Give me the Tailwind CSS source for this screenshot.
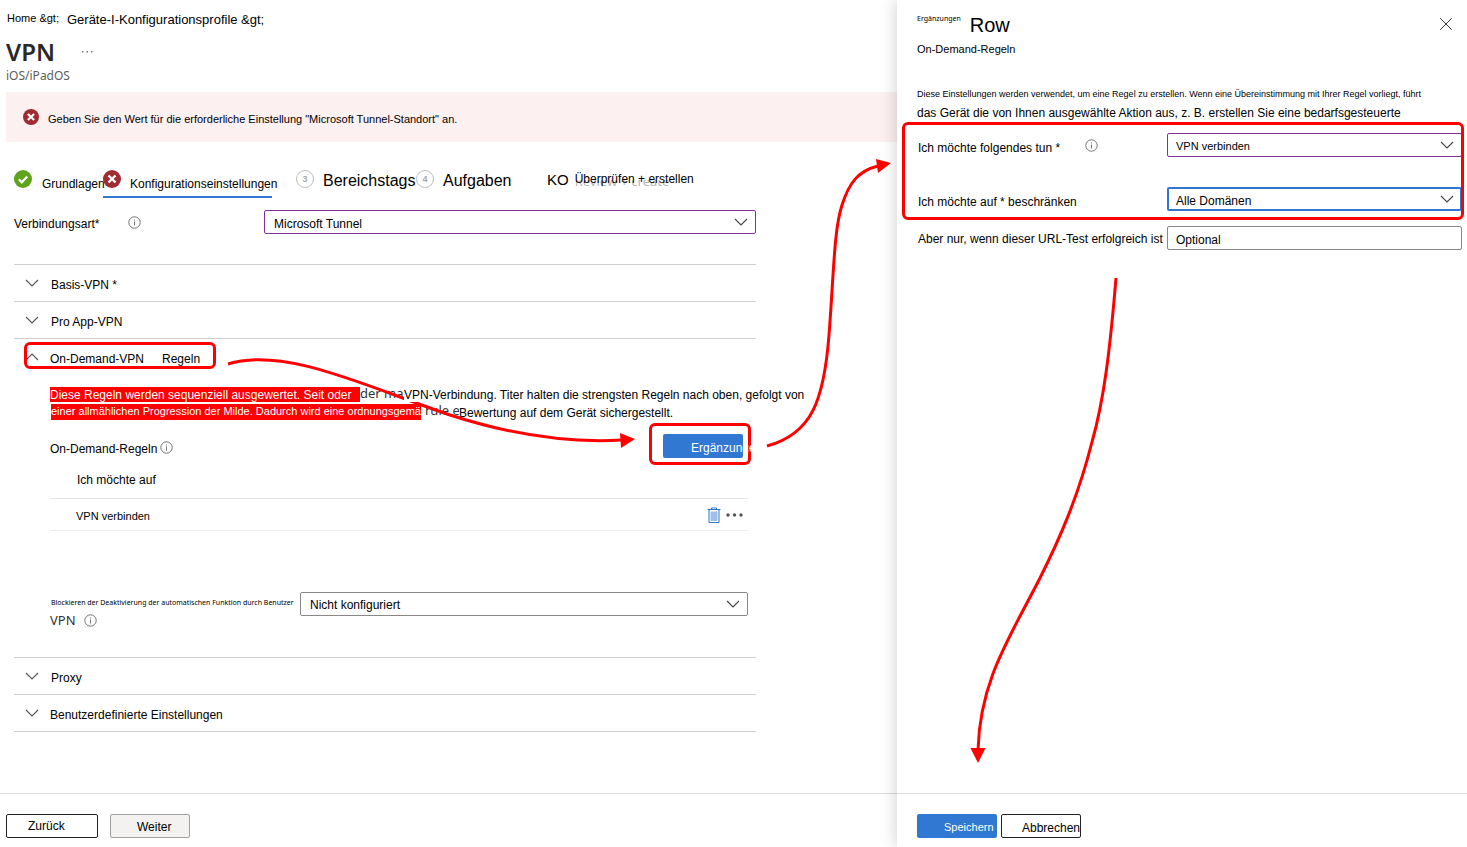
<!DOCTYPE html>
<html lang="de">
<head>
<meta charset="utf-8">
<title>VPN – Konfigurationsprofil</title>
<script src="https://cdn.jsdelivr.net/npm/@tailwindcss/browser@4"></script>
</head>
<body class="bg-white font-['Liberation_Sans',Arial,sans-serif] text-xs text-black">
<svg class="hidden">
  <symbol id="chev" viewBox="0 0 14 8"><path d="M1 1l6 6 6-6" fill="none" stroke="currentColor" stroke-width="1.100"/></symbol>
  <symbol id="info" viewBox="0 0 13 13"><circle cx="6.5" cy="6.5" r="5.7" fill="none" stroke="#737373"/><path d="M6 5.5h1v4H6zM6 3.4h1v1.100H6z" fill="#737373"/></symbol>
  <symbol id="fail" viewBox="0 0 18 18"><circle cx="9" cy="9" r="9" fill="#a02b30"/><path d="M5.500 5.500l7 7M12.500 5.500l-7 7" stroke="#fff" stroke-width="2.400"/></symbol>
</svg>
<div class="relative flex min-h-screen overflow-hidden">
  <main class="flex min-w-0 flex-1 flex-col">
    <nav class="flex h-9 items-center gap-2 pl-[7px]" aria-label="Brotkrumen">
      <a href="#" class="text-[11px]">Home &amp;gt;</a>
      <a href="#" class="pt-1 text-[13px]">Geräte-I-Konfigurationsprofile &amp;gt;</a>
    </nav>
    <div class="flex h-8 items-center gap-[26px] pl-[6px]">
      <h1 class="font-['Noto_Sans',sans-serif] text-2xl leading-8 font-semibold text-[#292827]">VPN</h1>
      <button aria-label="Mehr"><svg class="h-[2px] w-3" viewBox="0 0 12 2" fill="#777"><path d="M1 0h1.500v1.500H1zM5.500 0H7v1.500H5.500zM10 0h1.500v1.500H10z"/></svg></button>
    </div>
    <p class="h-6 pl-[6px] font-['Noto_Sans',sans-serif] leading-4 text-[#605e5c]">iOS/iPadOS</p>
    <div role="alert" class="ml-[6px] flex h-[50px] items-center gap-[9px] bg-[#fdf0f0] pl-[17px]">
      <svg class="size-4"><use href="#fail"/></svg>
      <span class="pt-1 text-[11px]">Geben Sie den Wert für die erforderliche Einstellung "Microsoft Tunnel-Standort" an.</span>
    </div>
    <ol class="mt-[28px] flex h-7 pl-[14px]">
      <li class="flex w-[89px] gap-[10px] whitespace-nowrap">
        <svg class="size-[18px] shrink-0" viewBox="0 0 18 18"><circle cx="9" cy="9" r="9" fill="#5ea41c"/><path d="M4.800 9.300l3 3L13.200 6.500" fill="none" stroke="#fff" stroke-width="2.200"/></svg>
        <span class="pt-[6px]">Grundlagen</span></li>
      <li class="flex w-[169px] gap-[9px] border-b-2 border-[#3078d1] whitespace-nowrap">
        <svg class="size-[18px] shrink-0"><use href="#fail"/></svg>
        <span class="pt-[6px]">Konfigurationseinstellungen</span></li>
      <li class="ml-6 flex w-[120px] gap-[9px] whitespace-nowrap">
        <span class="flex size-[18px] shrink-0 items-center justify-center rounded-full border border-[#bdbdbd] text-[9px] font-bold text-[#a8a8a8]">3</span><span class="text-base leading-[22px]">Bereichstags</span></li>
      <li class="flex w-[131px] gap-[9px] whitespace-nowrap">
        <span class="flex size-[18px] shrink-0 items-center justify-center rounded-full border border-[#bdbdbd] text-[9px] font-bold text-[#a8a8a8]">4</span><span class="text-base leading-[22px]">Aufgaben</span></li>
      <li class="flex gap-[6px] whitespace-nowrap">
        <span class="text-[15px] leading-5">KO</span>
        <span class="relative"><span class="absolute top-[10px] left-0 flex h-[6px] items-end overflow-hidden font-['Noto_Sans',sans-serif] text-[13px] leading-[10px] text-[#b5b5b5]" aria-hidden="true">Review + create</span><span class="relative leading-[18px]">Überprüfen + erstellen</span></span></li>
    </ol>
    <div class="mt-3 flex h-6 items-center pl-[14px]">
      <label for="conn" class="w-[114px] pt-1">Verbindungsart*</label>
      <svg class="size-[13px]"><use href="#info"/></svg>
      <div class="relative ml-[123px] w-[492px]">
        <select id="conn" class="block h-6 w-full appearance-none rounded-xs border border-[#8230a0] pt-1 pl-[9px] text-xs"><option>Microsoft Tunnel</option></select>
        <svg class="pointer-events-none absolute top-2 right-2 h-2 w-[14px] text-[#444]"><use href="#chev"/></svg>
      </div>
    </div>
    <div class="mt-[30px] ml-[14px] w-[742px] border-b border-[#d2d0ce]">
      <button class="flex h-[37px] w-full items-center border-t border-[#d2d0ce] pl-[11px]"><svg class="h-2 w-[14px] text-[#555]"><use href="#chev"/></svg><span class="pt-1 pl-3">Basis-VPN *</span></button>
      <button class="flex h-[37px] w-full items-center border-t border-[#d2d0ce] pl-[11px]"><svg class="h-2 w-[14px] text-[#555]"><use href="#chev"/></svg><span class="pt-1 pl-3">Pro App-VPN</span></button>
      <section class="border-t border-[#d2d0ce]">
        <div class="relative">
          <button class="flex h-9 w-full items-center pl-[11px]"><svg class="h-2 w-[14px] rotate-180 text-[#555]"><use href="#chev"/></svg><span class="pt-1 pl-[11px]">On-Demand-VPN</span><span class="pt-1 pl-[18px]">Regeln</span></button>
          <span class="pointer-events-none absolute top-[3px] left-[10px] h-[27px] w-[192px] rounded-md border-3 border-[#fe0000]"></span>
        </div>
        <div class="pl-9">
          <p class="mt-3 flex h-[15px] whitespace-nowrap"><span class="w-[310px] shrink-0 bg-[#fe0000] leading-4 text-white">Diese Regeln werden sequenziell ausgewertet. Seit oder</span><span class="w-11 shrink-0 overflow-hidden font-['Noto_Sans',sans-serif] text-[13px] leading-3 text-[#333]">der ma</span><span class="relative z-20 bg-white leading-4">VPN-Verbindung. Titer halten die strengsten Regeln nach oben, gefolgt von</span></p>
          <p class="mt-[2px] ml-px flex h-4 whitespace-nowrap"><span class="w-[370px] shrink-0 overflow-hidden bg-[#fe0000] text-[11px] leading-[15px] text-white">einer allmählichen Progression der Milde. Dadurch wird eine ordnungsgemä</span><span class="w-[38px] shrink-0 overflow-hidden pl-1 font-['Noto_Sans',sans-serif] text-[13px] leading-3 text-[#333]">rule e</span><span class="leading-[18px]">Bewertung auf dem Gerät sichergestellt.</span></p>
          <div class="relative mt-[3px] flex h-[42px] items-center">
            <span class="pt-[10px]">On-Demand-Regeln</span><svg class="mt-[7px] ml-[3px] size-[13px]"><use href="#info"/></svg>
            <span class="pointer-events-none absolute top-0 left-[599px] h-[42px] w-[102px] rounded-md border-3 border-[#fe0000]"></span>
            <button class="relative mt-[4px] mr-[13px] ml-auto h-6 w-20 rounded-xs bg-[#3078d1] pt-1 pl-7 text-left whitespace-nowrap text-white">Ergänzungen</button>
          </div>
          <table class="mt-[-4px] w-[698px] border-collapse text-left">
            <thead><tr class="h-[37px] border-b border-[#e6e6e6]"><th class="pt-[2px] pl-[27px] font-normal">Ich möchte auf</th><th></th></tr></thead>
            <tbody><tr class="h-8 border-b border-[#eeeeee]"><td class="pt-1 pl-[26px] text-[11px]">VPN verbinden</td>
            <td class="pt-px"><span class="flex items-center justify-end gap-[5px] pr-[5px]">
              <button aria-label="Löschen"><svg class="h-4 w-[14px]" viewBox="0 0 14 16"><path d="M4.500 2.500v-1.500h5v1.500M.5 2.500h13M2 2.500v13h10v-13" fill="none" stroke="#3078d1"/><path d="M3.500 4.500h7V14h-7z" fill="#9dbfea"/></svg></button>
              <button aria-label="Mehr"><svg class="h-1 w-[17px]" viewBox="0 0 17 4" fill="#555"><circle cx="2" cy="2" r="1.700"/><circle cx="8.500" cy="2" r="1.700"/><circle cx="15" cy="2" r="1.700"/></svg></button>
            </span></td></tr></tbody>
          </table>
          <div class="mt-[61px] flex h-[65px] items-start">
            <label for="block" class="w-[250px] whitespace-nowrap"><span class="block pt-[5px] pl-px font-['Noto_Sans',sans-serif] text-[7px] leading-3">Blockieren der Deaktivierung der automatischen Funktion durch Benutzer</span><span class="flex h-6 items-center gap-2 font-['Noto_Sans',sans-serif] text-[13px] text-[#333]">VPN <svg class="size-[13px]"><use href="#info"/></svg></span></label>
            <div class="relative w-[448px]">
              <select id="block" class="block h-6 w-full appearance-none rounded-xs border border-[#8a8886] pt-[2px] pl-[9px] text-xs"><option>Nicht konfiguriert</option></select>
              <svg class="pointer-events-none absolute top-2 right-2 h-2 w-[14px] text-[#444]"><use href="#chev"/></svg>
            </div>
          </div>
        </div>
      </section>
      <button class="flex h-[37px] w-full items-center border-t border-[#d2d0ce] pl-[11px]"><svg class="h-2 w-[14px] text-[#555]"><use href="#chev"/></svg><span class="pt-1 pl-3">Proxy</span></button>
      <button class="flex h-[37px] w-full items-center border-t border-[#d2d0ce] pl-[11px]"><svg class="h-2 w-[14px] text-[#555]"><use href="#chev"/></svg><span class="pt-1 pl-[11px]">Benutzerdefinierte Einstellungen</span></button>
    </div>
    <footer class="mt-auto flex h-[54px] gap-3 border-t border-[#dcdcdc] pt-5 pl-[6px]">
      <button class="h-6 w-[92px] rounded-xs border border-[#222] pl-[21px] text-left">Zurück</button>
      <button class="h-6 w-20 rounded-xs border border-[#a19f9d] bg-[#f3f2f1] pt-px pl-[26px] text-left">Weiter</button>
    </footer>
  </main>

  <aside class="relative z-10 flex w-[570px] shrink-0 flex-col bg-white shadow-[0_0_16px_rgba(0,0,0,0.2)]">
    <header class="flex h-10 items-start pr-[15px] pl-5">
      <span class="pt-[13px] font-['Noto_Sans',sans-serif] text-[7px] leading-3">Ergänzungen</span>
      <h2 class="pt-[13px] pl-[9px] text-xl leading-6">Row</h2>
      <button aria-label="Schließen" class="mt-[18px] ml-auto"><svg class="size-3" viewBox="0 0 12 12"><path d="M.3.3l11.400 11.400M11.700.3L.3 11.700" stroke="#333"/></svg></button>
    </header>
    <p class="h-[47px] pl-5 text-[11px] leading-[18px]">On-Demand-Regeln</p>
    <p class="pl-5 whitespace-nowrap"><span class="block text-[9px] leading-[14px]">Diese Einstellungen werden verwendet, um eine Regel zu erstellen. Wenn eine Übereinstimmung mit Ihrer Regel vorliegt, führt</span><span class="block leading-6">das Gerät die von Ihnen ausgewählte Aktion aus, z. B. erstellen Sie eine bedarfsgesteuerte</span></p>
    <div class="relative mt-[-3px] h-[98px] pt-[11px] pr-[5px] pl-[21px]">
      <div class="flex h-6 items-center">
        <label for="act" class="w-[167px] pt-[6px]">Ich möchte folgendes tun *</label><svg class="size-[13px]"><use href="#info"/></svg>
        <div class="relative ml-auto w-[295px]"><select id="act" class="block h-6 w-full appearance-none rounded-xs border border-[#8230a0] pt-[2px] pl-2 text-[11px]"><option>VPN verbinden</option></select>
        <svg class="pointer-events-none absolute top-2 right-2 h-2 w-[14px] text-[#444]"><use href="#chev"/></svg></div>
      </div>
      <div class="mt-[30px] flex h-6 items-center">
        <label for="dom" class="pt-[6px]">Ich möchte auf * beschränken</label>
        <div class="relative ml-auto w-[295px]"><select id="dom" class="block h-6 w-full appearance-none rounded-xs border-2 border-[#3078d1] pt-1 pl-[7px] text-xs"><option>Alle Domänen</option></select>
        <svg class="pointer-events-none absolute top-2 right-2 h-2 w-[14px] text-[#444]"><use href="#chev"/></svg></div>
      </div>
      <span class="pointer-events-none absolute inset-y-0 right-[3px] left-[5px] rounded-md border-3 border-[#fe0000]"></span>
    </div>
    <div class="mt-[6px] flex items-center pr-[5px] pl-[21px]">
      <label for="url" class="pt-[2px] whitespace-nowrap">Aber nur, wenn dieser URL-Test erfolgreich ist</label>
      <input id="url" placeholder="Optional" class="ml-auto h-6 w-[295px] rounded-xs border border-[#8a8886] pt-1 pl-2 placeholder:text-black">
    </div>
    <footer class="mt-auto flex h-[54px] gap-1 border-t border-[#dcdcdc] pt-5 pl-5">
      <button class="h-6 w-20 rounded-xs bg-[#3078d1] pt-[2px] pl-[27px] text-left text-[11px] text-white">Speichern</button>
      <button class="h-6 w-20 rounded-xs border border-[#222] pt-1 pl-5 text-left">Abbrechen</button>
    </footer>
  </aside>

  <svg class="pointer-events-none absolute top-0 left-0 z-10 h-[847px] w-[1467px]" viewBox="0 0 1467 847" fill="none" stroke="#fe0000" stroke-width="3" aria-hidden="true">
    <path d="M228 364C285 346 370 388 450 415C515 436 570 443 622 440"/>
    <path d="M767 446C812 434 824 400 829 335C834 270 834 230 842 205C849 183 858 171 878 166"/>
    <path d="M1116 278C1110 350 1104 400 1092 442C1078 497 1060 538 1040 578C1010 637 980 680 978 750"/>
    <path d="M635 439l-15-6 1 15zM891 163l-15-4 2 14zM978 763l-7.500-15h15z" fill="#fe0000" stroke="none"/>
  </svg>
</div>
</body>
</html>
